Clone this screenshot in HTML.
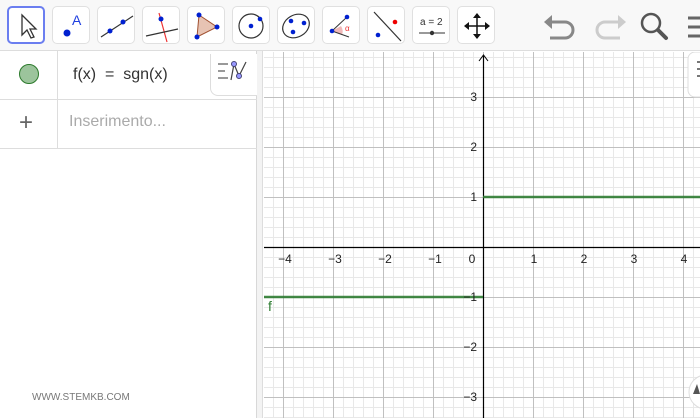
<!DOCTYPE html>
<html><head><meta charset="utf-8"><style>
*{margin:0;padding:0;box-sizing:border-box}
body{width:700px;height:418px;overflow:hidden;background:#fff;font-family:"Liberation Sans",sans-serif;position:relative}
.tb{position:absolute;left:0;top:0;width:700px;height:51px;background:#f8f8f8;border-bottom:1px solid #ddd}
.btn{position:absolute;top:6px;width:38px;height:38px;background:#fff;border:1px solid #e0e0e0;border-radius:5px}
.btn svg{position:absolute;left:0;top:0}
.sel{border:2px solid #6b7ef0}
.ap{position:absolute;left:0;top:51px;width:257px;height:367px;background:#fff;border-right:1px solid #d8d8d8}
.div{position:absolute;left:257px;top:51px;width:6px;height:367px;background:#f3f3f3;border-right:1px solid #ddd}
.row{position:absolute;left:0;width:257px;border-bottom:1px solid #ddd}
</style></head><body>
<div class="tb">
<div class="btn sel" style="left:7px"><svg width="36" height="36"><path d="M13 7 L13 27 L18 22 L22 30 L25 29 L21 21 L27 21 Z" fill="#fff" stroke="#333" stroke-width="1.3"/></svg></div>
<div class="btn" style="left:52px"><svg width="38" height="38"><circle cx="14" cy="26" r="3.5" fill="#0020d0"/><text x="19" y="18" font-size="14" fill="#2040e0" font-family="Liberation Sans">A</text></svg></div>
<div class="btn" style="left:97px"><svg width="38" height="38"><line x1="3" y1="30" x2="35" y2="9" stroke="#333" stroke-width="1.2"/><circle cx="12" cy="24" r="2.5" fill="#0020d0"/><circle cx="25" cy="15" r="2.5" fill="#0020d0"/></svg></div>
<div class="btn" style="left:142px"><svg width="38" height="38"><line x1="16" y1="6" x2="24" y2="35" stroke="#e33" stroke-width="1.2"/><line x1="3" y1="29" x2="35" y2="22" stroke="#333" stroke-width="1.2"/><circle cx="18" cy="12" r="2.5" fill="#0020d0"/></svg></div>
<div class="btn" style="left:187px"><svg width="38" height="38"><path d="M11 8 L29 20 L9 30 Z" fill="#e7c3b3" stroke="#a05030" stroke-width="1"/><circle cx="11" cy="8" r="2.5" fill="#0020d0"/><circle cx="29" cy="20" r="2.5" fill="#0020d0"/><circle cx="9" cy="30" r="2.5" fill="#0020d0"/></svg></div>
<div class="btn" style="left:232px"><svg width="38" height="38"><circle cx="18" cy="19" r="12" fill="none" stroke="#333" stroke-width="1.2"/><circle cx="18" cy="19" r="2.3" fill="#0020d0"/><circle cx="27" cy="12" r="2.3" fill="#0020d0"/></svg></div>
<div class="btn" style="left:277px"><svg width="38" height="38"><ellipse cx="18" cy="19" rx="14" ry="11" transform="rotate(-30 18 19)" fill="none" stroke="#333" stroke-width="1.2"/><circle cx="13" cy="14" r="2.3" fill="#0020d0"/><circle cx="26" cy="16" r="2.3" fill="#0020d0"/><circle cx="15" cy="25" r="2.3" fill="#0020d0"/></svg></div>
<div class="btn" style="left:322px"><svg width="38" height="38"><path d="M9 24 L18 19 A10 10 0 0 1 19 28 Z" fill="#f0b8b8"/><line x1="9" y1="24" x2="24" y2="10" stroke="#333"/><line x1="9" y1="24" x2="26" y2="30" stroke="#333"/><circle cx="9" cy="24" r="2.3" fill="#0020d0"/><circle cx="24" cy="10" r="2.3" fill="#0020d0"/><text x="22" y="24" font-size="8" fill="#e33">α</text></svg></div>
<div class="btn" style="left:367px"><svg width="38" height="38"><line x1="6" y1="5" x2="33" y2="34" stroke="#333" stroke-width="1.2"/><circle cx="27" cy="15" r="2.3" fill="#e00"/><circle cx="10" cy="28" r="2.3" fill="#0020d0"/></svg></div>
<div class="btn" style="left:412px"><svg width="38" height="38"><text x="7" y="18" font-size="10" fill="#333">a = 2</text><line x1="6" y1="26" x2="32" y2="26" stroke="#333"/><circle cx="19" cy="26" r="2.2" fill="#333"/></svg></div>
<div class="btn" style="left:457px"><svg width="38" height="38"><path d="M19 7 L19 31 M7 19 L31 19" stroke="#111" stroke-width="1.5"/><path d="M19 6 L15 11 L23 11Z M19 32 L15 27 L23 27Z M6 19 L11 15 L11 23Z M32 19 L27 15 L27 23Z" fill="#111"/></svg></div>
<svg style="position:absolute;left:540px;top:8px" width="160" height="36">
<path d="M10 14 L25 14 A8 8 0 0 1 25 30 L10 30" fill="none" stroke="#888" stroke-width="3"/><path d="M4 14 L12 7 L12 21Z" fill="#888"/>
<path d="M80 14 L65 14 A8 8 0 0 0 65 30 L80 30" fill="none" stroke="#ccc" stroke-width="3"/><path d="M86 14 L78 7 L78 21Z" fill="#ccc"/>
<circle cx="111" cy="15" r="9" fill="none" stroke="#555" stroke-width="2.5"/><line x1="118" y1="22" x2="126" y2="30" stroke="#555" stroke-width="4" stroke-linecap="round"/>
<path d="M148 10 H160 M148 19 H160 M148 28 H160" stroke="#666" stroke-width="3"/>
</svg>
</div>
<div class="ap">
<div class="row" style="top:0;height:49px"></div>
<div class="row" style="top:49px;height:49px"></div>
<div style="position:absolute;left:57px;top:0;width:1px;height:98px;background:#ddd"></div>
<div style="position:absolute;left:19px;top:13px;width:20px;height:20px;border-radius:50%;background:#9cc49c;border:1px solid #2c7a2c"></div>
<div style="position:absolute;left:73px;top:15px;font-size:16px;color:#333">f(x) &nbsp;=&nbsp; sgn(x)</div>
<div style="position:absolute;left:19px;top:58px;font-size:24px;color:#666;font-weight:300">+</div>
<div style="position:absolute;left:69px;top:62px;font-size:16px;color:#aaa">Inserimento...</div>
<div style="position:absolute;left:210px;top:3px;width:50px;height:42px;background:#fff;border:1px solid #ddd;border-radius:0 0 0 8px;border-top:none"></div>
<svg style="position:absolute;left:210px;top:3px" width="50" height="40"><path d="M8 10 H18 M8 17 H15 M8 24 H18" stroke="#999" stroke-width="2"/><path d="M21 26 L24 10 L29 22 L36 8" fill="none" stroke="#444" stroke-width="1.2"/><circle cx="24" cy="10" r="2.5" fill="#99f" stroke="#447"/><circle cx="29" cy="22" r="2.5" fill="#99f" stroke="#447"/></svg>
<div style="position:absolute;left:32px;top:341px;font-size:10px;color:#777">WWW.STEMKB.COM</div>
</div>
<div class="div"></div>
<svg style="position:absolute;left:0;top:0" width="700" height="418">
<defs>
<pattern id="mn" x="283" y="247" width="10" height="10" patternUnits="userSpaceOnUse"><path d="M0.5 0 V10 M0 0.5 H10" stroke="#e8e8e8" stroke-width="1"/></pattern>
<pattern id="mj" x="283" y="247" width="50" height="50" patternUnits="userSpaceOnUse"><path d="M0.5 0 V50 M0 0.5 H50" stroke="#c0c0c0" stroke-width="1"/></pattern>
<clipPath id="c"><rect x="264" y="52" width="436" height="366"/></clipPath>
</defs>
<g clip-path="url(#c)">
<rect x="264" y="52" width="436" height="366" fill="url(#mn)"/>
<rect x="264" y="52" width="436" height="366" fill="url(#mj)"/>
<line x1="264" y1="247.5" x2="700" y2="247.5" stroke="#000" stroke-width="1.2"/>
<line x1="483.5" y1="56" x2="483.5" y2="418" stroke="#000" stroke-width="1.2"/>
<path d="M479 61 L483.5 55 L488 61" fill="none" stroke="#000"/>
<line x1="483" y1="197" x2="700" y2="197" stroke="#2e7d32" stroke-width="2.5" opacity="0.9"/>
<line x1="264" y1="297" x2="483" y2="297" stroke="#2e7d32" stroke-width="2.5" opacity="0.9"/>
<g font-size="12" fill="#222" font-family="Liberation Sans" text-anchor="middle">
<text x="285" y="263">−4</text><text x="335" y="263">−3</text><text x="385" y="263">−2</text><text x="435" y="263">−1</text><text x="472" y="263">0</text>
<text x="534" y="263">1</text><text x="584" y="263">2</text><text x="634" y="263">3</text><text x="684" y="263">4</text>
<g text-anchor="end"><text x="477" y="101">3</text><text x="477" y="151">2</text><text x="477" y="201">1</text><text x="477" y="301">−1</text><text x="477" y="351">−2</text><text x="477" y="401">−3</text></g>
</g>
<text x="268" y="311" font-size="14" fill="#2e7d32">f</text>
<rect x="688" y="52" width="20" height="45" rx="7" fill="#fff" stroke="#ddd"/>
<path d="M697 62 H700 M697 69 H700 M697 76 H700" stroke="#777" stroke-width="2"/>
<circle cx="706" cy="392" r="17" fill="#fff" stroke="#ddd"/>
<path d="M693 394 L697 384 L700 394Z" fill="#555"/>
</g>
</svg>
</body></html>
